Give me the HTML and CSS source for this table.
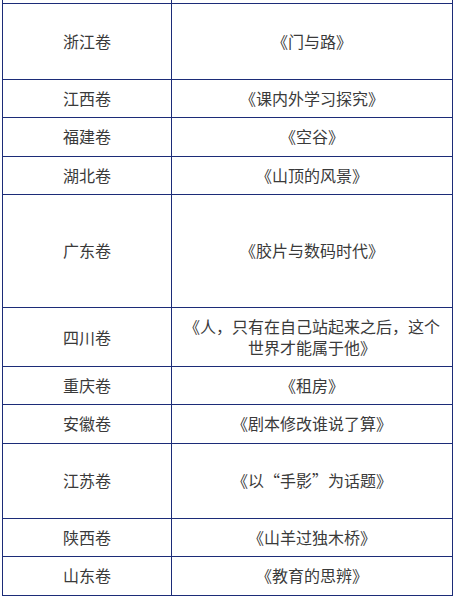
FILE: index.html
```html
<!DOCTYPE html>
<html lang="zh-CN">
<head>
<meta charset="utf-8">
<link rel="stylesheet" href="styles.css">
</head>
<body>
<div class="page">
<table class="essay-table">
  <colgroup><col class="col-a"><col class="col-b"></colgroup>
  <tbody>
    <tr class="r-cut"><td></td><td></td></tr>
    <tr class="r76"><td>浙江卷</td><td>《门与路》</td></tr>
    <tr class="r38"><td>江西卷</td><td>《课内外学习探究》</td></tr>
    <tr class="r39"><td>福建卷</td><td>《空谷》</td></tr>
    <tr class="r38"><td>湖北卷</td><td>《山顶的风景》</td></tr>
    <tr class="r113"><td>广东卷</td><td>《胶片与数码时代》</td></tr>
    <tr class="r38"><td>四川卷</td><td>《人，只有在自己站起来之后，这个世界才能属于他》</td></tr>
    <tr class="r38"><td>重庆卷</td><td>《租房》</td></tr>
    <tr class="r39"><td>安徽卷</td><td>《剧本修改谁说了算》</td></tr>
    <tr class="r75"><td>江苏卷</td><td>《以“手影”为话题》</td></tr>
    <tr class="r38"><td>陕西卷</td><td>《山羊过独木桥》</td></tr>
    <tr class="r39"><td>山东卷</td><td>《教育的思辨》</td></tr>
  </tbody>
</table>
</div>
</body>
</html>
```

FILE: styles.css
```css
html, body {
  margin: 0;
  padding: 0;
  background: #ffffff;
}

.page {
  height: 596px;
  overflow: hidden;
  padding-left: 2px;
}

.essay-table {
  border-collapse: collapse;
  table-layout: fixed;
  width: 450px;
  margin-top: -35px;
  font-family: "Microsoft YaHei", "Noto Sans CJK SC", sans-serif;
  font-size: 16px;
  line-height: 21px;
  color: #3a3a3a;
}

.col-a { width: 169px; }
.col-b { width: 281px; }

.essay-table td {
  border: 1px solid #1c2c78;
  text-align: center;
  vertical-align: middle;
  padding: 8px 8px;
}

.r-cut td { height: 21px; }
.r38 td { padding-top: 8px; padding-bottom: 8px; }
.r39 td { padding-top: 8px; padding-bottom: 9px; }
.r76 td { padding-top: 27px; padding-bottom: 27px; }
.r75 td { padding-top: 26px; padding-bottom: 27px; }
.r113 td { padding-top: 45px; padding-bottom: 46px; }
```
